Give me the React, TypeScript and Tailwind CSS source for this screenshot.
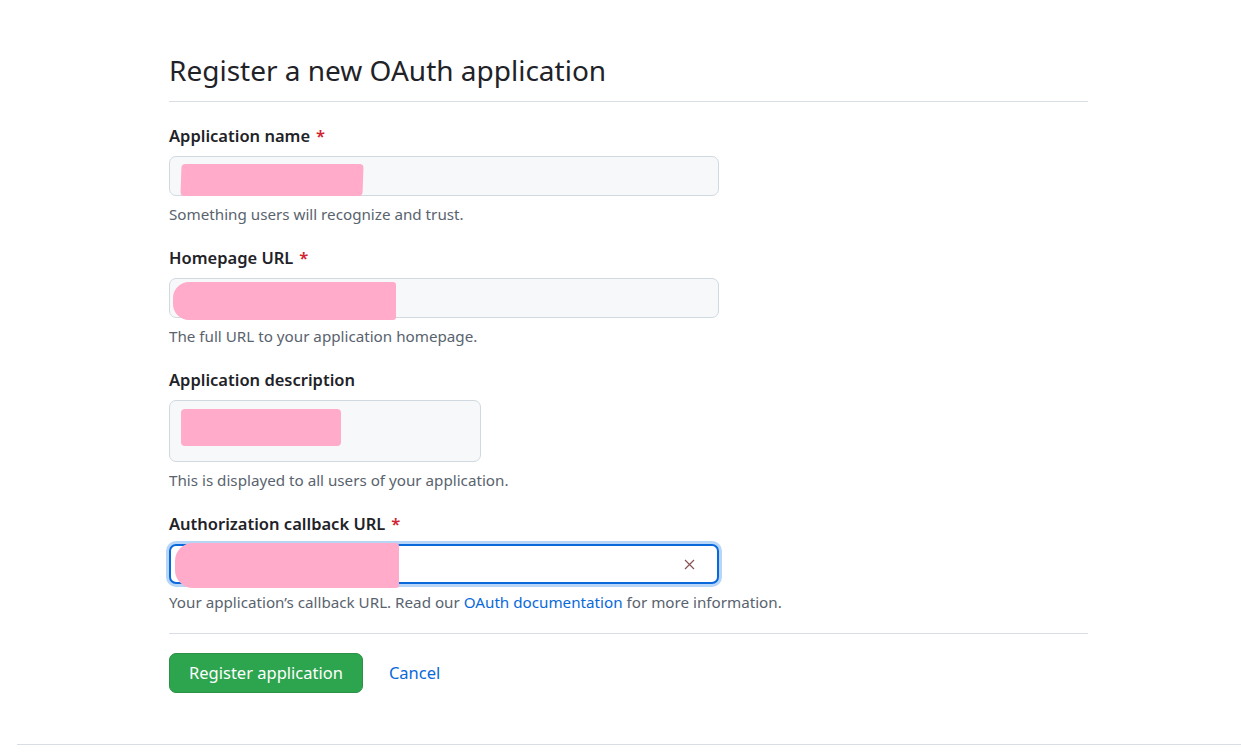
import React from "react";

const font = { fontFamily: '"Noto Sans", "Open Sans", sans-serif' };

function Blob({ className }: { className: string }) {
  return <div className={"pointer-events-none absolute bg-[#ffabc9] " + className} />;
}

function Field({
  label,
  required,
  note,
  children,
}: {
  label: string;
  required?: boolean;
  note: React.ReactNode;
  children: React.ReactNode;
}) {
  return (
    <div className="mt-[22px]">
      <div className="text-[16.5px] font-semibold leading-[24px] text-[#1f2328]">
        {label}
        {required && <span className="ml-[6px] text-[#d1242f]">*</span>}
      </div>
      <div className="mt-[8px]">{children}</div>
      <p className="mt-[8px] text-[15.2px] leading-[20px] text-[#59636e]">{note}</p>
    </div>
  );
}

export default function App() {
  return (
    <div className="min-h-[755px] bg-white text-[#1f2328]" style={font}>
      <div className="ml-[169px] w-[919px] pt-[50px]">
        <h1 className="border-b border-[#d8dee4] pb-[10px] text-[28px] font-normal leading-[41px]">
          Register a new OAuth application
        </h1>

        <Field label="Application name" required note="Something users will recognize and trust.">
          <div className="relative h-[40px] w-[550px] rounded-[7px] border border-[#d1d9e0] bg-[#f6f8fa]">
            <Blob className="left-[11px] top-[7px] h-[32px] w-[182px] -skew-x-2 rounded-[4px]" />
          </div>
        </Field>

        <Field label="Homepage URL" required note="The full URL to your application homepage.">
          <div className="relative h-[40px] w-[550px] rounded-[7px] border border-[#d1d9e0] bg-[#f6f8fa]">
            <Blob className="left-[3px] top-[3px] h-[38px] w-[223px] rounded-l-[16px] rounded-r-[3px]" />
          </div>
        </Field>

        <Field label="Application description" note="This is displayed to all users of your application.">
          <div className="relative h-[62px] w-[312px] rounded-[7px] border border-[#d1d9e0] bg-[#f6f8fa]">
            <Blob className="left-[11px] top-[8px] h-[37px] w-[160px] rounded-[4px]" />
          </div>
        </Field>

        <Field
          label="Authorization callback URL"
          required
          note={
            <>
              Your application’s callback URL. Read our{" "}
              <a className="text-[#0969da]" href="#">
                OAuth documentation
              </a>{" "}
              for more information.
            </>
          }
        >
          <div className="relative flex h-[40px] w-[550px] items-center justify-end rounded-[7px] border-2 border-[#0969da] bg-white pr-[22px] ring-[3px] ring-[#b6d5f7]">
            <svg width="11" height="11" viewBox="0 0 11 11" className="text-[#8a5252]">
              <path d="M1 1 L10 10 M10 1 L1 10" stroke="currentColor" strokeWidth="1.2" />
            </svg>
            <Blob className="left-[4px] top-[-3px] h-[45px] w-[224px] rounded-l-[18px] rounded-r-[3px]" />
          </div>
        </Field>

        <div className="mt-[21px] flex items-center gap-[26px] border-t border-[#d8dee4] pt-[19px]">
          <button className="h-[40px] rounded-[7px] border border-[#2a9147] bg-[#2da44e] px-[19px] text-[16.5px] leading-[24px] text-white">
            Register application
          </button>
          <a href="#" className="text-[16.5px] text-[#0969da]">
            Cancel
          </a>
        </div>
      </div>
      <div className="ml-[17px] mt-[51px] border-t border-[#d8dee4]" />
    </div>
  );
}
